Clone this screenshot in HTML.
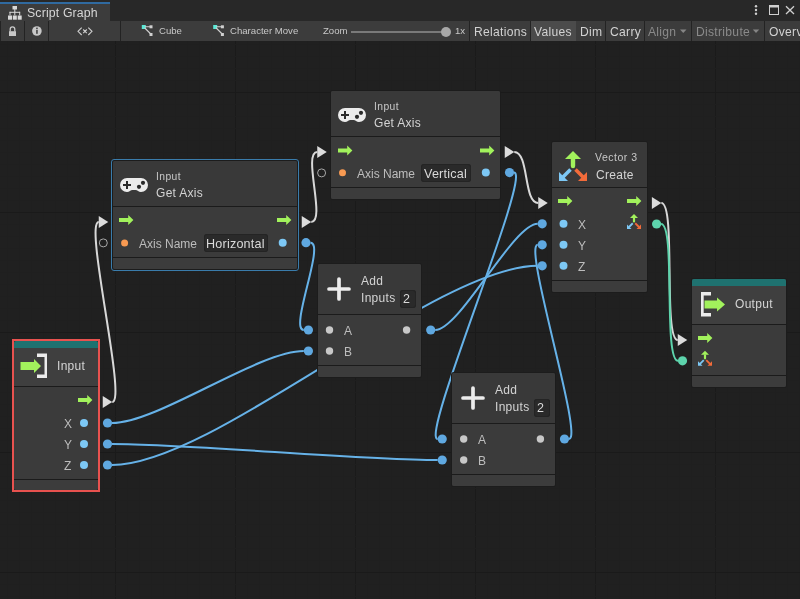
<!DOCTYPE html>
<html><head><meta charset="utf-8"><style>
html,body{margin:0;padding:0;}
body{width:800px;height:599px;overflow:hidden;position:relative;background:#202020;font-family:"Liberation Sans",sans-serif;}
.abs,.node,.t,.fld,.sel,.err,.strip,.tab,.tabline,.toolbar,.sep,.btnon{position:absolute;}
svg{position:absolute;left:0;top:0;}
.node{background:#3b3b3b;border-radius:2px;overflow:hidden;box-shadow:0 0 0 1px #1c1c1c;}
.node .hdr{position:absolute;left:0;right:0;top:0;background:#393939;}
.node .bd{position:absolute;left:0;right:0;background:#3b3b3b;}
.node .ft{position:absolute;left:0;right:0;background:#3c3c3c;}
.node .dv{position:absolute;left:0;right:0;height:1.5px;background:#1b1b1b;}
.node .teal{position:absolute;left:0;right:0;top:0;height:7px;background:#1f7270;}
.sel{border:1.3px solid #3a7cab;border-radius:3px;box-sizing:border-box;}
.err{border:2px solid #e8524f;box-sizing:border-box;}
.t{white-space:nowrap;line-height:1;will-change:transform;}
.fld{background:#2a2a2a;border-radius:3px;box-shadow:inset 0 0 0 1px #242424;}
.strip{left:0;top:0;width:800px;height:21px;background:#282828;}
.tab{left:0;top:2px;width:110px;height:19px;background:#3c3c3c;}
.tabline{left:0;top:2px;width:110px;height:2px;background:#306aa0;}
.toolbar{left:0;top:21px;width:800px;height:20px;background:#3c3c3c;}
.sep{top:21px;width:1px;height:20px;background:#232323;}
.btnon{top:21px;height:20px;background:#4b4b4b;}
</style></head><body>
<svg width="800" height="599"><rect x="7" y="41" width="1" height="558" fill="#1f1f1f"/><rect x="19" y="41" width="1" height="558" fill="#1f1f1f"/><rect x="31" y="41" width="1" height="558" fill="#1f1f1f"/><rect x="43" y="41" width="1" height="558" fill="#1f1f1f"/><rect x="55" y="41" width="1" height="558" fill="#1f1f1f"/><rect x="67" y="41" width="1" height="558" fill="#1f1f1f"/><rect x="79" y="41" width="1" height="558" fill="#1f1f1f"/><rect x="91" y="41" width="1" height="558" fill="#1f1f1f"/><rect x="103" y="41" width="1" height="558" fill="#1f1f1f"/><rect x="115" y="41" width="1" height="558" fill="#1a1a1a"/><rect x="127" y="41" width="1" height="558" fill="#1f1f1f"/><rect x="139" y="41" width="1" height="558" fill="#1f1f1f"/><rect x="151" y="41" width="1" height="558" fill="#1f1f1f"/><rect x="163" y="41" width="1" height="558" fill="#1f1f1f"/><rect x="175" y="41" width="1" height="558" fill="#1f1f1f"/><rect x="187" y="41" width="1" height="558" fill="#1f1f1f"/><rect x="199" y="41" width="1" height="558" fill="#1f1f1f"/><rect x="211" y="41" width="1" height="558" fill="#1f1f1f"/><rect x="223" y="41" width="1" height="558" fill="#1f1f1f"/><rect x="235" y="41" width="1" height="558" fill="#1a1a1a"/><rect x="247" y="41" width="1" height="558" fill="#1f1f1f"/><rect x="259" y="41" width="1" height="558" fill="#1f1f1f"/><rect x="271" y="41" width="1" height="558" fill="#1f1f1f"/><rect x="283" y="41" width="1" height="558" fill="#1f1f1f"/><rect x="295" y="41" width="1" height="558" fill="#1f1f1f"/><rect x="307" y="41" width="1" height="558" fill="#1f1f1f"/><rect x="319" y="41" width="1" height="558" fill="#1f1f1f"/><rect x="331" y="41" width="1" height="558" fill="#1f1f1f"/><rect x="343" y="41" width="1" height="558" fill="#1f1f1f"/><rect x="355" y="41" width="1" height="558" fill="#1a1a1a"/><rect x="367" y="41" width="1" height="558" fill="#1f1f1f"/><rect x="379" y="41" width="1" height="558" fill="#1f1f1f"/><rect x="391" y="41" width="1" height="558" fill="#1f1f1f"/><rect x="403" y="41" width="1" height="558" fill="#1f1f1f"/><rect x="415" y="41" width="1" height="558" fill="#1f1f1f"/><rect x="427" y="41" width="1" height="558" fill="#1f1f1f"/><rect x="439" y="41" width="1" height="558" fill="#1f1f1f"/><rect x="451" y="41" width="1" height="558" fill="#1f1f1f"/><rect x="463" y="41" width="1" height="558" fill="#1f1f1f"/><rect x="475" y="41" width="1" height="558" fill="#1a1a1a"/><rect x="487" y="41" width="1" height="558" fill="#1f1f1f"/><rect x="499" y="41" width="1" height="558" fill="#1f1f1f"/><rect x="511" y="41" width="1" height="558" fill="#1f1f1f"/><rect x="523" y="41" width="1" height="558" fill="#1f1f1f"/><rect x="535" y="41" width="1" height="558" fill="#1f1f1f"/><rect x="547" y="41" width="1" height="558" fill="#1f1f1f"/><rect x="559" y="41" width="1" height="558" fill="#1f1f1f"/><rect x="571" y="41" width="1" height="558" fill="#1f1f1f"/><rect x="583" y="41" width="1" height="558" fill="#1f1f1f"/><rect x="595" y="41" width="1" height="558" fill="#1a1a1a"/><rect x="607" y="41" width="1" height="558" fill="#1f1f1f"/><rect x="619" y="41" width="1" height="558" fill="#1f1f1f"/><rect x="631" y="41" width="1" height="558" fill="#1f1f1f"/><rect x="643" y="41" width="1" height="558" fill="#1f1f1f"/><rect x="655" y="41" width="1" height="558" fill="#1f1f1f"/><rect x="667" y="41" width="1" height="558" fill="#1f1f1f"/><rect x="679" y="41" width="1" height="558" fill="#1f1f1f"/><rect x="691" y="41" width="1" height="558" fill="#1f1f1f"/><rect x="703" y="41" width="1" height="558" fill="#1f1f1f"/><rect x="715" y="41" width="1" height="558" fill="#1a1a1a"/><rect x="727" y="41" width="1" height="558" fill="#1f1f1f"/><rect x="739" y="41" width="1" height="558" fill="#1f1f1f"/><rect x="751" y="41" width="1" height="558" fill="#1f1f1f"/><rect x="763" y="41" width="1" height="558" fill="#1f1f1f"/><rect x="775" y="41" width="1" height="558" fill="#1f1f1f"/><rect x="787" y="41" width="1" height="558" fill="#1f1f1f"/><rect x="799" y="41" width="1" height="558" fill="#1f1f1f"/><rect x="0" y="44" width="800" height="1" fill="#1f1f1f"/><rect x="0" y="56" width="800" height="1" fill="#1f1f1f"/><rect x="0" y="68" width="800" height="1" fill="#1f1f1f"/><rect x="0" y="80" width="800" height="1" fill="#1f1f1f"/><rect x="0" y="92" width="800" height="1" fill="#1a1a1a"/><rect x="0" y="104" width="800" height="1" fill="#1f1f1f"/><rect x="0" y="116" width="800" height="1" fill="#1f1f1f"/><rect x="0" y="128" width="800" height="1" fill="#1f1f1f"/><rect x="0" y="140" width="800" height="1" fill="#1f1f1f"/><rect x="0" y="152" width="800" height="1" fill="#1f1f1f"/><rect x="0" y="164" width="800" height="1" fill="#1f1f1f"/><rect x="0" y="176" width="800" height="1" fill="#1f1f1f"/><rect x="0" y="188" width="800" height="1" fill="#1f1f1f"/><rect x="0" y="200" width="800" height="1" fill="#1f1f1f"/><rect x="0" y="212" width="800" height="1" fill="#1a1a1a"/><rect x="0" y="224" width="800" height="1" fill="#1f1f1f"/><rect x="0" y="236" width="800" height="1" fill="#1f1f1f"/><rect x="0" y="248" width="800" height="1" fill="#1f1f1f"/><rect x="0" y="260" width="800" height="1" fill="#1f1f1f"/><rect x="0" y="272" width="800" height="1" fill="#1f1f1f"/><rect x="0" y="284" width="800" height="1" fill="#1f1f1f"/><rect x="0" y="296" width="800" height="1" fill="#1f1f1f"/><rect x="0" y="308" width="800" height="1" fill="#1f1f1f"/><rect x="0" y="320" width="800" height="1" fill="#1f1f1f"/><rect x="0" y="332" width="800" height="1" fill="#1a1a1a"/><rect x="0" y="344" width="800" height="1" fill="#1f1f1f"/><rect x="0" y="356" width="800" height="1" fill="#1f1f1f"/><rect x="0" y="368" width="800" height="1" fill="#1f1f1f"/><rect x="0" y="380" width="800" height="1" fill="#1f1f1f"/><rect x="0" y="392" width="800" height="1" fill="#1f1f1f"/><rect x="0" y="404" width="800" height="1" fill="#1f1f1f"/><rect x="0" y="416" width="800" height="1" fill="#1f1f1f"/><rect x="0" y="428" width="800" height="1" fill="#1f1f1f"/><rect x="0" y="440" width="800" height="1" fill="#1f1f1f"/><rect x="0" y="452" width="800" height="1" fill="#1a1a1a"/><rect x="0" y="464" width="800" height="1" fill="#1f1f1f"/><rect x="0" y="476" width="800" height="1" fill="#1f1f1f"/><rect x="0" y="488" width="800" height="1" fill="#1f1f1f"/><rect x="0" y="500" width="800" height="1" fill="#1f1f1f"/><rect x="0" y="512" width="800" height="1" fill="#1f1f1f"/><rect x="0" y="524" width="800" height="1" fill="#1f1f1f"/><rect x="0" y="536" width="800" height="1" fill="#1f1f1f"/><rect x="0" y="548" width="800" height="1" fill="#1f1f1f"/><rect x="0" y="560" width="800" height="1" fill="#1f1f1f"/><rect x="0" y="572" width="800" height="1" fill="#1a1a1a"/><rect x="0" y="584" width="800" height="1" fill="#1f1f1f"/><rect x="0" y="596" width="800" height="1" fill="#1f1f1f"/><path d="M112.25,402 C127.25,402 83.75,222 98.75,222" stroke="#d8d8d8" stroke-width="2" fill="none"/><path d="M311.25,222 C326.25,222 302.25,152 317.25,152" stroke="#d8d8d8" stroke-width="2" fill="none"/><path d="M514.25,152 C529.25,152 523.25,203 538.25,203" stroke="#d8d8d8" stroke-width="2" fill="none"/><path d="M661.35,203 C676.35,203 662.75,340 677.75,340" stroke="#d8d8d8" stroke-width="2" fill="none"/><path d="M661.1,224 C676.1,224 663.0,360.8 678.0,360.8" stroke="#5dd4ac" stroke-width="2" fill="none"/><path d="M310.5,242.7 C325.5,242.7 288.8,330 303.8,330" stroke="#66b2e8" stroke-width="2" fill="none"/><path d="M112.0,423 C158.032,423 257.76800000000003,351 303.8,351" stroke="#66b2e8" stroke-width="2" fill="none"/><path d="M112.0,444 C190.168,444 359.532,460 437.7,460" stroke="#66b2e8" stroke-width="2" fill="none"/><path d="M112.0,465 C214.168,465 435.53200000000004,265.8 537.7,265.8" stroke="#66b2e8" stroke-width="2" fill="none"/><path d="M435.2,330 C459.8,330 513.1,223.8 537.7,223.8" stroke="#66b2e8" stroke-width="2" fill="none"/><path d="M514.0,172.6 C532.312,172.6 419.388,439 437.7,439" stroke="#66b2e8" stroke-width="2" fill="none"/><path d="M569.0,439 C584.0,439 522.7,244.8 537.7,244.8" stroke="#66b2e8" stroke-width="2" fill="none"/></svg>
<div class="node" style="left:331px;top:91px;width:169px;height:108px"><div class="hdr" style="height:45px;"></div><div class="dv" style="top:45px"></div><div class="bd" style="top:46px;height:50px"></div><div class="dv" style="top:96px"></div><div class="ft" style="top:97px;bottom:0"></div></div><div class="node" style="left:113px;top:161px;width:184px;height:108px"><div class="hdr" style="height:45px;"></div><div class="dv" style="top:45px"></div><div class="bd" style="top:46px;height:50px"></div><div class="dv" style="top:96px"></div><div class="ft" style="top:97px;bottom:0"></div></div><div class="sel" style="left:111px;top:159px;width:188px;height:112px"></div><div class="node" style="left:552px;top:142px;width:95px;height:150px"><div class="hdr" style="height:45px;"></div><div class="dv" style="top:45px"></div><div class="bd" style="top:46px;height:92px"></div><div class="dv" style="top:138px"></div><div class="ft" style="top:139px;bottom:0"></div></div><div class="node" style="left:318px;top:264px;width:103px;height:113px"><div class="hdr" style="height:50px;"></div><div class="dv" style="top:50px"></div><div class="bd" style="top:51px;height:50px"></div><div class="dv" style="top:101px"></div><div class="ft" style="top:102px;bottom:0"></div></div><div class="node" style="left:452px;top:373px;width:103px;height:113px"><div class="hdr" style="height:50px;"></div><div class="dv" style="top:50px"></div><div class="bd" style="top:51px;height:50px"></div><div class="dv" style="top:101px"></div><div class="ft" style="top:102px;bottom:0"></div></div><div class="node" style="left:14px;top:341px;width:84px;height:149px"><div class="hdr" style="height:45px;background:#3f3f3f"></div><div class="dv" style="top:45px"></div><div class="bd" style="top:46px;height:92px"></div><div class="dv" style="top:138px"></div><div class="ft" style="top:139px;bottom:0"></div><div class="teal"></div></div><div class="err" style="left:12px;top:339px;width:88px;height:153px"></div><div class="node" style="left:692px;top:279px;width:94px;height:108px"><div class="hdr" style="height:45px;background:#3f3f3f"></div><div class="dv" style="top:45px"></div><div class="bd" style="top:46px;height:50px"></div><div class="dv" style="top:96px"></div><div class="ft" style="top:97px;bottom:0"></div><div class="teal"></div></div><div class="t" style="left:156.3px;top:171.68px;font-size:10.3px;color:#c8c8c8;letter-spacing:0.4px">Input</div><div class="t" style="left:156.3px;top:186.84px;font-size:12px;color:#d4d4d4;letter-spacing:0.3px">Get Axis</div><div class="t" style="left:374.3px;top:101.68px;font-size:10.3px;color:#c8c8c8;letter-spacing:0.4px">Input</div><div class="t" style="left:374.3px;top:116.84px;font-size:12px;color:#d4d4d4;letter-spacing:0.3px">Get Axis</div><div class="t" style="left:595.1px;top:152.01px;font-size:10.5px;color:#c8c8c8;letter-spacing:0.5px">Vector 3</div><div class="t" style="left:595.6px;top:168.54px;font-size:12px;color:#d4d4d4;letter-spacing:0.3px">Create</div><div class="t" style="left:361.3px;top:274.84px;font-size:12px;color:#d4d4d4;letter-spacing:0.3px">Add</div><div class="t" style="left:361.3px;top:291.54px;font-size:12px;color:#d4d4d4;letter-spacing:0.3px">Inputs</div><div class="t" style="left:495.3px;top:383.84px;font-size:12px;color:#d4d4d4;letter-spacing:0.3px">Add</div><div class="t" style="left:495.3px;top:400.54px;font-size:12px;color:#d4d4d4;letter-spacing:0.3px">Inputs</div><div class="t" style="left:57px;top:359.84px;font-size:12px;color:#d4d4d4;letter-spacing:0.3px">Input</div><div class="t" style="left:735.2px;top:298.44px;font-size:12px;color:#d4d4d4;letter-spacing:0.3px">Output</div><div class="t" style="left:139.4px;top:238.14px;font-size:12px;color:#bdbdbd;">Axis Name</div><div class="t" style="left:356.8px;top:168.04px;font-size:12px;color:#bdbdbd;">Axis Name</div><div class="fld" style="left:203.5px;top:234.4px;width:64.0px;height:17.299999999999983px"></div><div class="t" style="left:205.5px;top:238.33px;font-size:12.6px;color:#dadada;letter-spacing:0.2px">Horizontal</div><div class="fld" style="left:421px;top:164.3px;width:49.5px;height:17.299999999999983px"></div><div class="t" style="left:424px;top:167.73px;font-size:12.6px;color:#dadada;letter-spacing:0.2px">Vertical</div><div class="fld" style="left:400px;top:290px;width:16px;height:17.600000000000023px"></div><div class="t" style="left:403.2px;top:292.72px;font-size:12.5px;color:#dadada;">2</div><div class="fld" style="left:534px;top:399px;width:16px;height:17.5px"></div><div class="t" style="left:537.2px;top:402.02px;font-size:12.5px;color:#dadada;">2</div><div class="t" style="left:64px;top:417.84px;font-size:12px;color:#bdbdbd;letter-spacing:0.3px">X</div><div class="t" style="left:64px;top:438.54px;font-size:12px;color:#bdbdbd;letter-spacing:0.3px">Y</div><div class="t" style="left:64px;top:459.64px;font-size:12px;color:#bdbdbd;letter-spacing:0.3px">Z</div><div class="t" style="left:577.8px;top:218.54px;font-size:12px;color:#bdbdbd;letter-spacing:0.3px">X</div><div class="t" style="left:577.8px;top:239.54px;font-size:12px;color:#bdbdbd;letter-spacing:0.3px">Y</div><div class="t" style="left:577.8px;top:260.54px;font-size:12px;color:#bdbdbd;letter-spacing:0.3px">Z</div><div class="t" style="left:344.3px;top:324.84px;font-size:12px;color:#bdbdbd;letter-spacing:0.3px">A</div><div class="t" style="left:344.3px;top:345.84px;font-size:12px;color:#bdbdbd;letter-spacing:0.3px">B</div><div class="t" style="left:478.3px;top:433.84px;font-size:12px;color:#bdbdbd;letter-spacing:0.3px">A</div><div class="t" style="left:478.3px;top:454.84px;font-size:12px;color:#bdbdbd;letter-spacing:0.3px">B</div>
<svg width="800" height="599"><path d="M102.75,396.0 L112.25,402 L102.75,408.0 Z" fill="#dcdcdc"/><path d="M78,397.9 L87.21600000000001,397.9 L87.21600000000001,395.0 L92.4,400 L87.21600000000001,405.0 L87.21600000000001,402.1 L78,402.1 Z" fill="#a2f25c"/><circle cx="84" cy="423" r="4" fill="#7dc8f5"/><circle cx="107.5" cy="423" r="4.6" fill="#5fa8e0"/><circle cx="84" cy="444" r="4" fill="#7dc8f5"/><circle cx="107.5" cy="444" r="4.6" fill="#5fa8e0"/><circle cx="84" cy="465" r="4" fill="#7dc8f5"/><circle cx="107.5" cy="465" r="4.6" fill="#5fa8e0"/><path d="M98.75,216.0 L108.25,222 L98.75,228.0 Z" fill="#dcdcdc"/><path d="M119,217.9 L128.216,217.9 L128.216,215.0 L133.4,220 L128.216,225.0 L128.216,222.1 L119,222.1 Z" fill="#a2f25c"/><path d="M277,217.9 L286.216,217.9 L286.216,215.0 L291.4,220 L286.216,225.0 L286.216,222.1 L277,222.1 Z" fill="#a2f25c"/><path d="M301.75,216.0 L311.25,222 L301.75,228.0 Z" fill="#dcdcdc"/><circle cx="103.3" cy="242.9" r="4" fill="none" stroke="#a8a8a8" stroke-width="1"/><circle cx="124.6" cy="243" r="3.5" fill="#f89a52"/><circle cx="282.7" cy="242.7" r="4" fill="#7dc8f5"/><circle cx="306" cy="242.7" r="4.6" fill="#5fa8e0"/><path d="M317.25,146.0 L326.75,152 L317.25,158.0 Z" fill="#dcdcdc"/><path d="M338,148.4 L347.216,148.4 L347.216,145.5 L352.4,150.5 L347.216,155.5 L347.216,152.6 L338,152.6 Z" fill="#a2f25c"/><path d="M480,148.4 L489.216,148.4 L489.216,145.5 L494.4,150.5 L489.216,155.5 L489.216,152.6 L480,152.6 Z" fill="#a2f25c"/><path d="M504.75,146.0 L514.25,152 L504.75,158.0 Z" fill="#dcdcdc"/><circle cx="321.6" cy="172.9" r="4" fill="none" stroke="#a8a8a8" stroke-width="1"/><circle cx="342.5" cy="172.8" r="3.5" fill="#f89a52"/><circle cx="485.8" cy="172.6" r="4" fill="#7dc8f5"/><circle cx="509.5" cy="172.6" r="4.6" fill="#5fa8e0"/><path d="M538.25,197.0 L547.75,203 L538.25,209.0 Z" fill="#dcdcdc"/><path d="M558,198.9 L567.216,198.9 L567.216,196.0 L572.4,201 L567.216,206.0 L567.216,203.1 L558,203.1 Z" fill="#a2f25c"/><path d="M627,198.9 L636.216,198.9 L636.216,196.0 L641.4,201 L636.216,206.0 L636.216,203.1 L627,203.1 Z" fill="#a2f25c"/><path d="M651.85,197.0 L661.35,203 L651.85,209.0 Z" fill="#dcdcdc"/><circle cx="563.5" cy="223.8" r="4" fill="#7dc8f5"/><circle cx="542.2" cy="223.8" r="4.6" fill="#5fa8e0"/><circle cx="563.5" cy="244.8" r="4" fill="#7dc8f5"/><circle cx="542.2" cy="244.8" r="4.6" fill="#5fa8e0"/><circle cx="563.5" cy="265.8" r="4" fill="#7dc8f5"/><circle cx="542.2" cy="265.8" r="4.6" fill="#5fa8e0"/><circle cx="656.6" cy="224" r="4.6" fill="#5dd4ac"/><path d="M677.75,334.0 L687.25,340 L677.75,346.0 Z" fill="#dcdcdc"/><path d="M698,335.9 L707.216,335.9 L707.216,333.0 L712.4,338 L707.216,343.0 L707.216,340.1 L698,340.1 Z" fill="#a2f25c"/><circle cx="682.5" cy="360.8" r="4.6" fill="#5dd4ac"/><circle cx="329.5" cy="330" r="3.7" fill="#c8c8c8"/><circle cx="308.4" cy="330" r="4.6" fill="#5fa8e0"/><circle cx="329.5" cy="351" r="3.7" fill="#c8c8c8"/><circle cx="308.4" cy="351" r="4.6" fill="#5fa8e0"/><circle cx="406.6" cy="330" r="3.7" fill="#c8c8c8"/><circle cx="430.7" cy="330" r="4.6" fill="#5fa8e0"/><circle cx="463.7" cy="439" r="3.7" fill="#c8c8c8"/><circle cx="442.2" cy="439" r="4.6" fill="#5fa8e0"/><circle cx="463.7" cy="460" r="3.7" fill="#c8c8c8"/><circle cx="442.2" cy="460" r="4.6" fill="#5fa8e0"/><circle cx="540.4" cy="439" r="3.7" fill="#c8c8c8"/><circle cx="564.5" cy="439" r="4.6" fill="#5fa8e0"/><g transform="translate(120,178)"><path d="M7,0 H21 A7,7 0 0 1 21,14 C18.5,14 17.5,12 15.5,12 H12.5 C10.5,12 9.5,14 7,14 A7,7 0 0 1 7,0 Z" fill="#ececec"/><path d="M3,7 H11 M7,3 V11" stroke="#2a2a2a" stroke-width="2"/><circle cx="23" cy="4.8" r="2.1" fill="#2a2a2a"/><circle cx="19" cy="8.8" r="2.1" fill="#2a2a2a"/></g><g transform="translate(338,108)"><path d="M7,0 H21 A7,7 0 0 1 21,14 C18.5,14 17.5,12 15.5,12 H12.5 C10.5,12 9.5,14 7,14 A7,7 0 0 1 7,0 Z" fill="#ececec"/><path d="M3,7 H11 M7,3 V11" stroke="#2a2a2a" stroke-width="2"/><circle cx="23" cy="4.8" r="2.1" fill="#2a2a2a"/><circle cx="19" cy="8.8" r="2.1" fill="#2a2a2a"/></g><path d="M329,289 H349 M339,279 V299" stroke="#ececec" stroke-width="3.7" stroke-linecap="round"/><path d="M463,398 H483 M473,388 V408" stroke="#ececec" stroke-width="3.7" stroke-linecap="round"/><g transform="translate(565,151) scale(1.0)"><path d="M0,8 L8,0 L16,8 Z" fill="#a2f25c"/><path d="M5.8,7.5 H10.2 V15 A2.2,2.2 0 0 1 5.8,15 Z" fill="#a2f25c"/><path d="M-6,21 L-6,30 L3,30 Z" fill="#7dc8f5"/><path d="M-2,26 L5.5,18.5" stroke="#7dc8f5" stroke-width="3.6"/><path d="M22,21 L22,30 L13,30 Z" fill="#f26b3a"/><path d="M18,26 L10.5,18.5" stroke="#f26b3a" stroke-width="3.6"/></g><g transform="translate(20.5,353.5)"><path d="M0,8.5 H13.5 V5.5 L20.5,12.5 L13.5,19.5 V16.5 H0 Z" fill="#a2f25c"/><path d="M16.5,0 H26.5 V24.5 H16.5 V21 H24 V3.5 H16.5 Z" fill="#ececec"/></g><g transform="translate(701,292)"><path d="M10,0 H0 V24.5 H10 V21 H2.7 V3.5 H10 Z" fill="#ececec"/><path d="M3.5,8.5 H16 V5.5 L24,12.5 L16,19.5 V16.5 H3.5 Z" fill="#a2f25c"/></g><g transform="translate(630,214) scale(0.5)"><path d="M0,8 L8,0 L16,8 Z" fill="#a2f25c"/><path d="M5.8,7.5 H10.2 V15 A2.2,2.2 0 0 1 5.8,15 Z" fill="#a2f25c"/><path d="M-6,21 L-6,30 L3,30 Z" fill="#7dc8f5"/><path d="M-2,26 L5.5,18.5" stroke="#7dc8f5" stroke-width="3.6"/><path d="M22,21 L22,30 L13,30 Z" fill="#f26b3a"/><path d="M18,26 L10.5,18.5" stroke="#f26b3a" stroke-width="3.6"/></g><g transform="translate(701,350.8) scale(0.5)"><path d="M0,8 L8,0 L16,8 Z" fill="#a2f25c"/><path d="M5.8,7.5 H10.2 V15 A2.2,2.2 0 0 1 5.8,15 Z" fill="#a2f25c"/><path d="M-6,21 L-6,30 L3,30 Z" fill="#7dc8f5"/><path d="M-2,26 L5.5,18.5" stroke="#7dc8f5" stroke-width="3.6"/><path d="M22,21 L22,30 L13,30 Z" fill="#f26b3a"/><path d="M18,26 L10.5,18.5" stroke="#f26b3a" stroke-width="3.6"/></g></svg>
<div class="strip"></div><div class="tab"></div><div class="tabline"></div><div class="toolbar"></div><div class="sep" style="left:0px"></div><div class="sep" style="left:24px"></div><div class="sep" style="left:48px"></div><div class="sep" style="left:120px"></div><div class="sep" style="left:469px"></div><div class="sep" style="left:530px"></div><div class="sep" style="left:575px"></div><div class="sep" style="left:605px"></div><div class="sep" style="left:644px"></div><div class="sep" style="left:691px"></div><div class="sep" style="left:764px"></div><div class="btnon" style="left:531px;width:44.5px"></div><div class="t" style="left:27px;top:6.59px;font-size:12.3px;color:#d6d6d6;letter-spacing:0.15px">Script Graph</div><div class="t" style="left:474.4px;top:26.26px;font-size:12.1px;color:#d2d2d2;letter-spacing:0.3px">Relations</div><div class="t" style="left:534.4px;top:26.26px;font-size:12.1px;color:#d2d2d2;letter-spacing:0.3px">Values</div><div class="t" style="left:580px;top:26.26px;font-size:12.1px;color:#d2d2d2;letter-spacing:0.3px">Dim</div><div class="t" style="left:609.5px;top:26.26px;font-size:12.1px;color:#d2d2d2;letter-spacing:0.3px">Carry</div><div class="t" style="left:648.3px;top:26.26px;font-size:12.1px;color:#8a8a8a;letter-spacing:0.3px">Align</div><div class="t" style="left:695.5px;top:26.26px;font-size:12.1px;color:#8a8a8a;letter-spacing:0.3px">Distribute</div><div class="t" style="left:769.3px;top:26.26px;font-size:12.1px;color:#d2d2d2;letter-spacing:0.3px">Overview</div><div class="t" style="left:159.3px;top:25.67px;font-size:9.6px;color:#c8c8c8;">Cube</div><div class="t" style="left:229.8px;top:25.67px;font-size:9.6px;color:#c8c8c8;">Character Move</div><div class="t" style="left:322.5px;top:25.67px;font-size:9.6px;color:#c8c8c8;">Zoom</div><div class="t" style="left:455.3px;top:25.67px;font-size:9.6px;color:#c8c8c8;">1x</div>
<svg width="800" height="41"><g fill="#d8d8d8"><rect x="12.5" y="6" width="4.5" height="3.5"/><rect x="14.3" y="9" width="1" height="3"/><rect x="9.5" y="11.8" width="10.6" height="1"/><rect x="9.5" y="11.8" width="1" height="3.5"/><rect x="14.3" y="11.8" width="1" height="3.5"/><rect x="19.2" y="11.8" width="1" height="3.5"/><rect x="8" y="15.5" width="4" height="4.2"/><rect x="12.8" y="15.5" width="4" height="4.2"/><rect x="17.7" y="15.5" width="4" height="4.2"/></g><path d="M10.2,31.5 V29.2 A2.3,2.3 0 0 1 14.8,29.2 V31.5" stroke="#c8c8c8" stroke-width="1.3" fill="none"/><rect x="9" y="31.2" width="7" height="4.8" fill="#c8c8c8"/><circle cx="36.9" cy="31" r="4.8" fill="#c8c8c8"/><rect x="36.2" y="27.6" width="1.5" height="1.4" fill="#3c3c3c"/><rect x="36.2" y="29.8" width="1.5" height="4" fill="#3c3c3c"/><path d="M81.7,27.6 L78,31.3 L81.7,35 M88.3,27.6 L92,31.3 L88.3,35 M83.2,29.5 L86.8,33.1 M86.8,29.5 L83.2,33.1" stroke="#cccccc" stroke-width="1.1" fill="none"/><g transform="translate(141.8,25)"><rect x="0" y="0" width="4" height="4" fill="#5ce8d6"/><path d="M3,1.8 H8.5 M3,3 L9,9" stroke="#d0d0d0" stroke-width="1.1"/><rect x="7.7" y="0.3" width="3" height="3" fill="#d0d0d0"/><rect x="7.7" y="8" width="3" height="3" fill="#d0d0d0"/></g><g transform="translate(213.2,25)"><rect x="0" y="0" width="4" height="4" fill="#5ce8d6"/><path d="M3,1.8 H8.5 M3,3 L9,9" stroke="#d0d0d0" stroke-width="1.1"/><rect x="7.7" y="0.3" width="3" height="3" fill="#d0d0d0"/><rect x="7.7" y="8" width="3" height="3" fill="#d0d0d0"/></g><rect x="351" y="31" width="92" height="2" fill="#7a7a7a"/><circle cx="446" cy="32" r="5" fill="#a8a8a8"/><path d="M680,29.5 H686.5 L683.25,33 Z" fill="#858585"/><path d="M752.8,29.5 H759.3 L756,33 Z" fill="#858585"/><circle cx="756" cy="6.2" r="1.2" fill="#d0d0d0"/><circle cx="756" cy="10" r="1.2" fill="#d0d0d0"/><circle cx="756" cy="13.7" r="1.2" fill="#d0d0d0"/><rect x="769.5" y="5.5" width="9" height="9" fill="none" stroke="#d0d0d0" stroke-width="1"/><rect x="769.5" y="5.5" width="9" height="2" fill="#d0d0d0"/><path d="M786,6.3 L794,14 M794,6.3 L786,14" stroke="#d0d0d0" stroke-width="1.3"/></svg>
</body></html>
